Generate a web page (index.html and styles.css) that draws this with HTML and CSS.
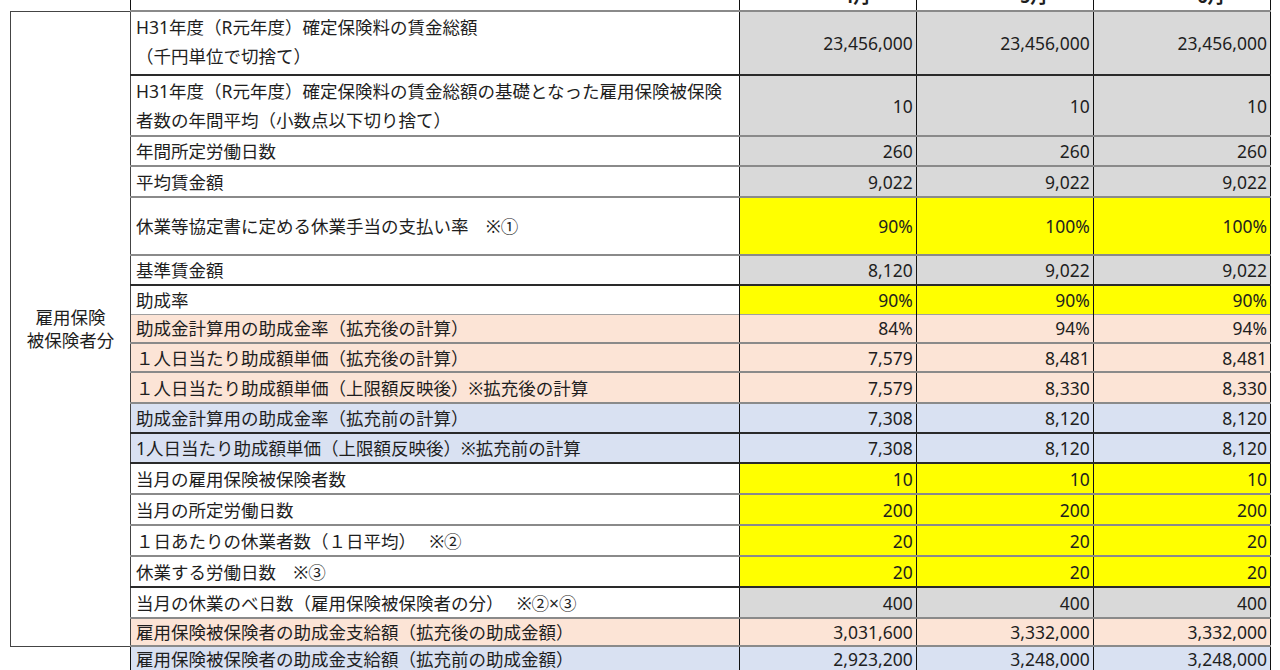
FILE: index.html
```html
<!DOCTYPE html>
<html lang="ja">
<head>
<meta charset="utf-8">
<link rel="stylesheet" href="styles.css">
</head>
<body>
<table class="sheet">
  <colgroup>
    <col class="c-group"><col class="c-label"><col class="c-val"><col class="c-val"><col class="c-val">
  </colgroup>
  <tr class="head">
    <td class="blank"></td>
    <td class="lbl"></td>
    <td class="hv">4月</td><td class="hv">5月</td><td class="hv">6月</td>
  </tr>
  <tr class="h64 gline">
    <td class="group" rowspan="18">雇用保険<br>被保険者分</td>
    <td class="lbl top">H31年度（R元年度）確定保険料の賃金総額<br>（千円単位で切捨て）</td>
    <td class="v gray">23,456,000</td><td class="v gray">23,456,000</td><td class="v gray">23,456,000</td>
  </tr>
  <tr class="h59 dline">
    <td class="lbl top">H31年度（R元年度）確定保険料の賃金総額の基礎となった雇用保険被保険<br>者数の年間平均（小数点以下切り捨て）</td>
    <td class="v gray">10</td><td class="v gray">10</td><td class="v gray">10</td>
  </tr>
  <tr class="h30 gline">
    <td class="lbl">年間所定労働日数</td>
    <td class="v gray">260</td><td class="v gray">260</td><td class="v gray">260</td>
  </tr>
  <tr class="h31 gline">
    <td class="lbl">平均賃金額</td>
    <td class="v gray">9,022</td><td class="v gray">9,022</td><td class="v gray">9,022</td>
  </tr>
  <tr class="h58 gline">
    <td class="lbl">休業等協定書に定める休業手当の支払い率　※①</td>
    <td class="v yellow">90%</td><td class="v yellow">100%</td><td class="v yellow">100%</td>
  </tr>
  <tr class="h30 gline">
    <td class="lbl">基準賃金額</td>
    <td class="v gray">8,120</td><td class="v gray">9,022</td><td class="v gray">9,022</td>
  </tr>
  <tr class="h29 dline">
    <td class="lbl">助成率</td>
    <td class="v yellow">90%</td><td class="v yellow">90%</td><td class="v yellow">90%</td>
  </tr>
  <tr class="h29 lline pink">
    <td class="lbl">助成金計算用の助成金率（拡充後の計算）</td>
    <td class="v">84%</td><td class="v">94%</td><td class="v">94%</td>
  </tr>
  <tr class="h29 gline pink">
    <td class="lbl">１人日当たり助成額単価（拡充後の計算）</td>
    <td class="v">7,579</td><td class="v">8,481</td><td class="v">8,481</td>
  </tr>
  <tr class="h31 gline pink">
    <td class="lbl">１人日当たり助成額単価（上限額反映後）※拡充後の計算</td>
    <td class="v">7,579</td><td class="v">8,330</td><td class="v">8,330</td>
  </tr>
  <tr class="h30 gline blue">
    <td class="lbl">助成金計算用の助成金率（拡充前の計算）</td>
    <td class="v">7,308</td><td class="v">8,120</td><td class="v">8,120</td>
  </tr>
  <tr class="h30 dline blue">
    <td class="lbl">1人日当たり助成額単価（上限額反映後）※拡充前の計算</td>
    <td class="v">7,308</td><td class="v">8,120</td><td class="v">8,120</td>
  </tr>
  <tr class="h31 dline">
    <td class="lbl">当月の雇用保険被保険者数</td>
    <td class="v yellow">10</td><td class="v yellow">10</td><td class="v yellow">10</td>
  </tr>
  <tr class="h31 gline">
    <td class="lbl">当月の所定労働日数</td>
    <td class="v yellow">200</td><td class="v yellow">200</td><td class="v yellow">200</td>
  </tr>
  <tr class="h31 gline">
    <td class="lbl">１日あたりの休業者数（１日平均）　 ※②</td>
    <td class="v yellow">20</td><td class="v yellow">20</td><td class="v yellow">20</td>
  </tr>
  <tr class="h31 gline">
    <td class="lbl">休業する労働日数　※③</td>
    <td class="v yellow">20</td><td class="v yellow">20</td><td class="v yellow">20</td>
  </tr>
  <tr class="h31 dline">
    <td class="lbl">当月の休業のべ日数（雇用保険被保険者の分）　 ※②×③</td>
    <td class="v gray">400</td><td class="v gray">400</td><td class="v gray">400</td>
  </tr>
  <tr class="h28 gline pink">
    <td class="lbl">雇用保険被保険者の助成金支給額（拡充後の助成金額）</td>
    <td class="v">3,031,600</td><td class="v">3,332,000</td><td class="v">3,332,000</td>
  </tr>
  <tr class="h30 gline blue last">
    <td class="blank"></td>
    <td class="lbl">雇用保険被保険者の助成金支給額（拡充前の助成金額）</td>
    <td class="v">2,923,200</td><td class="v">3,248,000</td><td class="v">3,248,000</td>
  </tr>
</table>
</body>
</html>
```

FILE: styles.css
```css
html, body {
  margin: 0;
  padding: 0;
  background: #ffffff;
  overflow: hidden;
}

body {
  font-family: "Noto Sans", "Noto Sans CJK JP", sans-serif;
  font-size: 17.5px;
  color: #1e1e1e;
}

.sheet {
  border-collapse: collapse;
  table-layout: fixed;
  margin: -30px 0 0 10px;
  width: 1261px;
}

.c-group { width: 120px; }
.c-label { width: 608px; }
.c-val { width: 177px; }

.sheet td {
  padding: 0 3px 0 5px;
  white-space: nowrap;
  overflow: hidden;
  line-height: 24px;
  border-left: 1px solid #111;
  border-right: 1px solid #111;
  vertical-align: middle;
}

.head { height: 41px; }
.head td { vertical-align: bottom; padding-bottom: 4px; line-height: 20px; font-weight: bold; }
.head .hv { text-align: right; padding-right: 45px; }
.head .blank { border-left: none; }

.h64 { height: 64px; }
.h59 { height: 59px; }
.h58 { height: 58px; }
.h31 { height: 31px; }
.h30 { height: 30px; }
.h29 { height: 29px; }
.h28 { height: 28px; }

.gline td { border-top: 2px solid #8a8a8a; }
.dline td { border-top: 2px solid #2a2a2a; }
.lline td { border-top: 1px solid #a0a0a0; }

.sheet td.group {
  border: 1px solid #444;
  text-align: center;
  line-height: 23px;
  padding: 0;
  background: #ffffff;
}

.sheet td.blank {
  border-left: none;
  border-top: none;
  border-bottom: none;
  background: #ffffff;
}

.lbl { text-align: left; }
.sheet td.top { vertical-align: top; padding-top: 1px; line-height: 29px; }

.sheet .last td { vertical-align: top; line-height: 25px; }

.v { text-align: right; }

td.gray { background: #d9d9d9; }
td.yellow { background: #ffff00; }
.pink td:not(.group):not(.blank) { background: #fce4d6; }
.blue td:not(.group):not(.blank) { background: #d9e1f2; }
```
